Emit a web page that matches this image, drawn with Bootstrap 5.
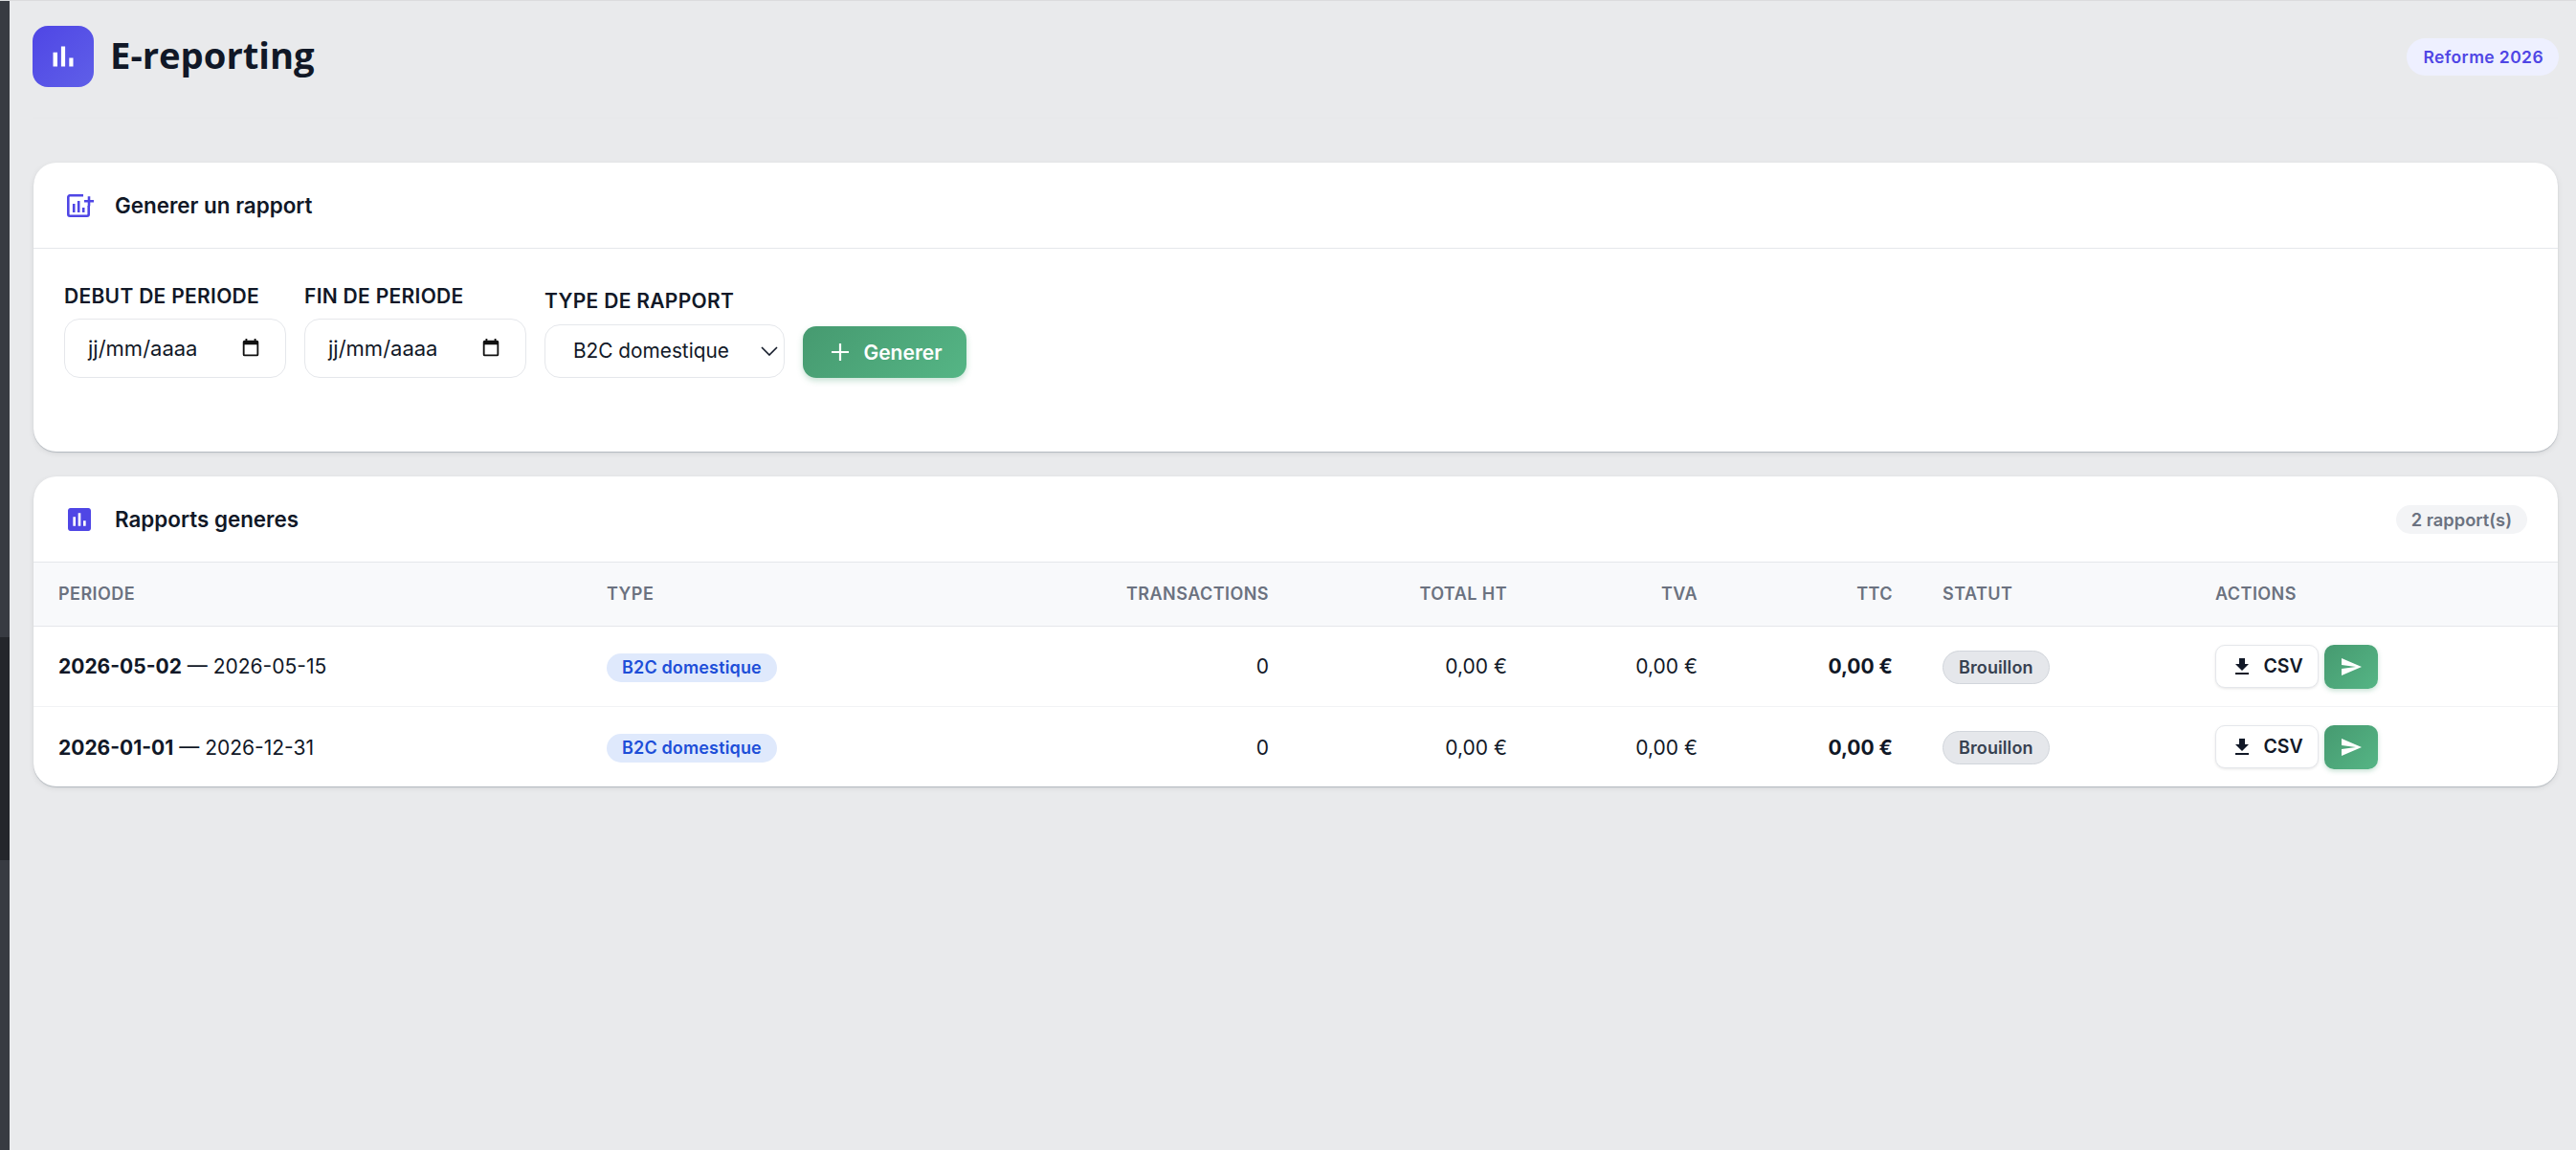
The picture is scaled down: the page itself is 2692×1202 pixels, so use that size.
<!DOCTYPE html>
<html lang="fr">
<head>
  <meta charset="UTF-8" />
  <meta name="viewport" content="width=device-width, initial-scale=1.0">
  <title>E-reporting</title>
  <link href="https://cdn.jsdelivr.net/npm/bootstrap@5.3.0/dist/css/bootstrap.min.css" rel="stylesheet">
  <style>
    html, body { height: 100%; }
    body { background-color: #e9eaec; color: #111827; font-family: Inter, "Liberation Sans", sans-serif; border-top: 1px solid #dcdcde; }
    .side-strip { width: 10px; }
    .strip-top { height: 665px; background-color: #383b42; }
    .strip-mid { height: 233px; background-color: #24262b; }
    .strip-end { background-color: #383b42; }
    .page-main { padding: 26px 19px 0 24px; }

    .page-head { height: 97px; margin-bottom: 46px; border-bottom: 1px solid #e7e8ea; padding-bottom: 32px; }
    .logo-box { width: 64px; height: 64px; border-radius: 16px; background: linear-gradient(135deg, #4f46e5, #5f5fe8); }
    .page-title { font-family: "Open Sans", "Noto Sans", sans-serif; font-weight: 700; font-size: 38.2px; margin: 0 0 2px 17px; color: #111827; }
    .reform-pill { background-color: #eef0ff; color: #4f46e5; font-weight: 600; font-size: 17.5px; padding: 0 16px 0 17px; height: 39px; line-height: 39px; border-radius: 20px; letter-spacing: .4px; margin-top: 13px; margin-right: -1px; }

    .report-card { border: 0; border-radius: 24px; background: #fff; box-shadow: 0 1px 1px rgba(100, 116, 130, .35), 0 2px 6px rgba(0, 0, 0, .08); overflow: hidden; margin-bottom: 26px; margin-left: 1px; }
    .report-head { height: 90px; padding: 0 32px 0 35px; border-bottom: 1px solid #e5e7eb; }
    .report-title { font-size: 22.4px; font-weight: 600; margin: 1px 0 0 22px; color: #111827; }
    .assess-icon { margin-left: -3px; margin-right: -1px; }
    .form-zone { height: 212px; padding: 0 32px 77px; gap: 19px; }
    .field-label { display: block; font-size: 21px; letter-spacing: .3px; font-weight: 600; color: #111827; margin-bottom: 9px; line-height: 28px; }
    .date-box { width: 232px; height: 62px; padding: 0 25px 0 24px; border: 1px solid #e5e7eb; border-radius: 16px; font-size: 22px; color: #111827; }
    .type-select { width: 251px; height: 56px; padding: 0 40px 0 29px; border-color: #e5e7eb; border-radius: 16px; font-size: 20.8px; color: #111827; font-family: inherit;
      background-image: url("data:image/svg+xml,%3csvg xmlns='http://www.w3.org/2000/svg' viewBox='0 0 18 10'%3e%3cpath fill='none' stroke='%23111827' stroke-width='1.6' d='M1 1l8 8 8-8'/%3e%3c/svg%3e");
      background-position: right 6px center; background-size: 18px 10px; }
    .type-wrap .field-label { margin-bottom: 10px; }
    .gen-btn { width: 171px; height: 54px; border: 0; border-radius: 14px; color: #fff; font-size: 21px; font-weight: 600; background: linear-gradient(135deg, #469a70, #55b585); box-shadow: 0 3px 6px rgba(70, 154, 112, .3); gap: 15px; padding: 2px 0 0 5px; }
    .gen-btn svg { margin-top: -3px; }
    .gen-btn:hover { color: #fff; }

    .count-pill { background-color: #f3f4f6; color: #6b7280; font-size: 18.3px; font-weight: 600; padding: 0 16px; height: 30px; line-height: 30px; border-radius: 15px; }

    .report-table { table-layout: fixed; width: 100%; margin: 0; font-size: 21px; color: #111827; }
    .report-table th, .report-table td { padding: 0 26px; vertical-align: middle; border-color: #f1f2f4; }
    .report-table thead th { height: 66px; background-color: #f8f9fb; color: #6b7280; font-size: 18px; font-weight: 600; letter-spacing: .45px; border-bottom: 1px solid #e5e7eb; }
    .report-table tbody td { height: 84px; padding-top: 2px; }
    .report-table tbody tr:last-child td { border-bottom: 0; }
    .cw-period { width: 573px; } .cw-type { width: 400px; } .cw-trans { width: 344px; } .cw-ht { width: 249px; }
    .cw-tva { width: 199px; } .cw-ttc { width: 204px; } .cw-status { width: 285px; } .cw-actions { width: 384px; }

    .type-pill { display: inline-block; background-color: #dfe9fc; color: #1d4ed8; font-size: 18px; font-weight: 600; letter-spacing: .15px; height: 30px; line-height: 30px; padding: 0 16px; border-radius: 15px; }
    .status-pill { display: inline-block; background-color: #e5e7eb; color: #374151; border: 1px solid #d1d5db; font-size: 18px; font-weight: 600; letter-spacing: .1px; height: 35px; line-height: 33px; padding: 0 16px; border-radius: 18px; }
    .action-group { gap: 6px; }
    .csv-btn { width: 108px; height: 45px; background: #fff; border: 1px solid #e5e7eb; border-radius: 10px; color: #111827; font-size: 19.5px; font-weight: 600; box-shadow: 0 1px 3px rgba(0, 0, 0, .1); gap: 10px; padding: 0; }
    .send-btn { width: 56px; height: 46px; border: 0; border-radius: 10px; background: linear-gradient(135deg, #469a70, #55b585); box-shadow: 0 2px 5px rgba(70, 154, 112, .3); padding: 0; }
  </style>
</head>
<body class="d-flex">
  <!-- window edge on the left -->
  <div class="side-strip d-flex flex-column flex-shrink-0">
    <div class="strip-top"></div>
    <div class="strip-mid"></div>
    <div class="strip-end flex-grow-1"></div>
  </div>

  <main class="page-main flex-grow-1">
    <header class="page-head d-flex align-items-start justify-content-between">
      <div class="d-flex align-items-center">
        <div class="logo-box d-flex align-items-center justify-content-center">
          <svg width="36" height="36" viewBox="0 0 24 24" fill="#fff"><path d="M5 9.2h3V19H5zM10.6 5h2.8v14h-2.8zm5.6 8H19v6h-2.8z"/></svg>
        </div>
        <h1 class="page-title">E-reporting</h1>
      </div>
      <span class="reform-pill">Reforme 2026</span>
    </header>

    <!-- Generer un rapport -->
    <section class="report-card">
      <div class="report-head d-flex align-items-center">
        <svg width="28" height="24" viewBox="0 0 28 24" fill="none" stroke="#4f46e5" stroke-width="2.6">
          <path d="M17 1.3H3A1.7 1.7 0 0 0 1.3 3v18A1.7 1.7 0 0 0 3 22.7h18a1.7 1.7 0 0 0 1.7-1.7V12"/>
          <path d="M18 7.3h10M23 2.3v10"/>
          <path d="M7.2 10v9M12.2 7v12M17.2 14v5"/>
        </svg>
        <h2 class="report-title">Generer un rapport</h2>
      </div>
      <div class="form-zone d-flex align-items-end">
        <div>
          <label class="field-label">DEBUT DE PERIODE</label>
          <div class="date-box d-flex align-items-center justify-content-between">
            <span>jj/mm/aaaa</span>
            <svg width="22" height="22" viewBox="0 0 24 24" fill="#111"><path d="M19 3h-1V1h-2v2H8V1H6v2H5a2 2 0 0 0-2 2v14a2 2 0 0 0 2 2h14a2 2 0 0 0 2-2V5a2 2 0 0 0-2-2zm0 16H5V8h14v11z"/></svg>
          </div>
        </div>
        <div>
          <label class="field-label">FIN DE PERIODE</label>
          <div class="date-box d-flex align-items-center justify-content-between">
            <span>jj/mm/aaaa</span>
            <svg width="22" height="22" viewBox="0 0 24 24" fill="#111"><path d="M19 3h-1V1h-2v2H8V1H6v2H5a2 2 0 0 0-2 2v14a2 2 0 0 0 2 2h14a2 2 0 0 0 2-2V5a2 2 0 0 0-2-2zm0 16H5V8h14v11z"/></svg>
          </div>
        </div>
        <div class="type-wrap">
          <label class="field-label">TYPE DE RAPPORT</label>
          <select class="form-select type-select">
            <option>B2C domestique</option>
          </select>
        </div>
        <button class="btn gen-btn d-flex align-items-center justify-content-center">
          <svg width="18" height="18" viewBox="0 0 18 18" stroke="#fff" stroke-width="2.2"><path d="M9 0v18M0 9h18"/></svg>
          Generer
        </button>
      </div>
    </section>

    <!-- Rapports generes -->
    <section class="report-card">
      <div class="report-head d-flex align-items-center">
        <svg class="assess-icon" width="32" height="32" viewBox="0 0 24 24" fill="#4f46e5"><path d="M19 3H5c-1.1 0-2 .9-2 2v14c0 1.1.9 2 2 2h14c1.1 0 2-.9 2-2V5c0-1.1-.9-2-2-2zM9 17H7v-7h2v7zm4 0h-2V7h2v10zm4 0h-2v-4h2v4z"/></svg>
        <h2 class="report-title">Rapports generes</h2>
        <span class="count-pill ms-auto">2 rapport(s)</span>
      </div>
      <table class="table report-table">
        <thead>
          <tr>
            <th class="cw-period">PERIODE</th>
            <th class="cw-type">TYPE</th>
            <th class="cw-trans text-end">TRANSACTIONS</th>
            <th class="cw-ht text-end">TOTAL HT</th>
            <th class="cw-tva text-end">TVA</th>
            <th class="cw-ttc text-end">TTC</th>
            <th class="cw-status">STATUT</th>
            <th class="cw-actions">ACTIONS</th>
          </tr>
        </thead>
        <tbody>
          <tr>
            <td><strong>2026-05-02</strong> — 2026-05-15</td>
            <td><span class="type-pill">B2C domestique</span></td>
            <td class="text-end">0</td>
            <td class="text-end">0,00 €</td>
            <td class="text-end">0,00 €</td>
            <td class="text-end fw-bold">0,00 €</td>
            <td><span class="status-pill">Brouillon</span></td>
            <td>
              <div class="d-flex action-group">
                <button class="btn csv-btn d-flex align-items-center justify-content-center">
                  <svg width="24" height="24" viewBox="0 0 24 24" fill="#111827"><path d="M19 9h-4V3H9v6H5l7 7 7-7zM5 18v2h14v-2H5z"/></svg>
                  CSV
                </button>
                <button class="btn send-btn d-flex align-items-center justify-content-center">
                  <svg width="24" height="24" viewBox="0 0 24 24" fill="#fff"><path d="M2.01 21 23 12 2.01 3 2 10l15 2-15 2z"/></svg>
                </button>
              </div>
            </td>
          </tr>
          <tr>
            <td><strong>2026-01-01</strong> — 2026-12-31</td>
            <td><span class="type-pill">B2C domestique</span></td>
            <td class="text-end">0</td>
            <td class="text-end">0,00 €</td>
            <td class="text-end">0,00 €</td>
            <td class="text-end fw-bold">0,00 €</td>
            <td><span class="status-pill">Brouillon</span></td>
            <td>
              <div class="d-flex action-group">
                <button class="btn csv-btn d-flex align-items-center justify-content-center">
                  <svg width="24" height="24" viewBox="0 0 24 24" fill="#111827"><path d="M19 9h-4V3H9v6H5l7 7 7-7zM5 18v2h14v-2H5z"/></svg>
                  CSV
                </button>
                <button class="btn send-btn d-flex align-items-center justify-content-center">
                  <svg width="24" height="24" viewBox="0 0 24 24" fill="#fff"><path d="M2.01 21 23 12 2.01 3 2 10l15 2-15 2z"/></svg>
                </button>
              </div>
            </td>
          </tr>
        </tbody>
      </table>
    </section>
  </main>

  <script src="https://cdn.jsdelivr.net/npm/bootstrap@5.3.0/dist/js/bootstrap.bundle.min.js"></script>
</body>
</html>
